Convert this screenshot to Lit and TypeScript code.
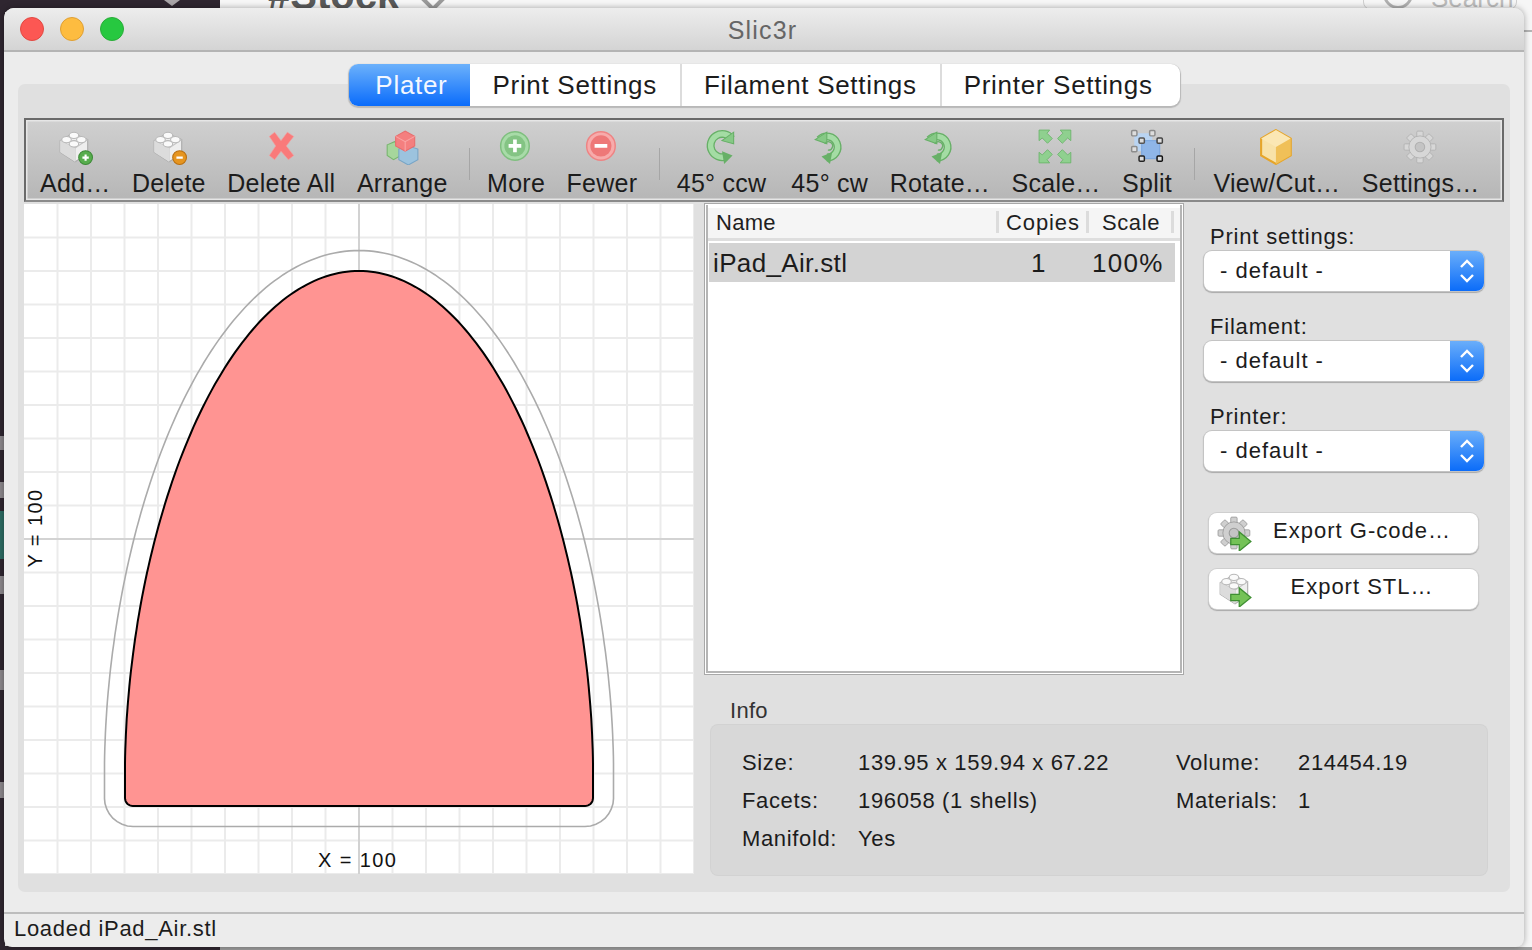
import { LitElement, html, css, svg } from "lit";
import { customElement } from "lit/decorators.js";

type Pt = [number, number];

// Object outline on the plater canvas: a super-ellipse dome over a straight base.
const CX = 335;
const TOP = 67;
const SHOULDER = 566;
const BOTTOM = 602;
const HALF = 234;
const CORNER = 8;

function dome(): Pt[] {
  const right: Pt[] = [];
  const n = 90;
  for (let i = 0; i <= n; i++) {
    const a = (i / n) * (Math.PI / 2);
    const t = Math.pow(Math.cos(a), 2 / 1.85);
    right.push([HALF * Math.sin(a), SHOULDER - t * (SHOULDER - TOP)]);
  }
  for (let y = SHOULDER + 6; y <= BOTTOM - CORNER; y += 6) right.push([HALF, y]);
  for (let i = 0; i <= 8; i++) {
    const a = (i / 8) * (Math.PI / 2);
    right.push([HALF - CORNER + CORNER * Math.cos(a), BOTTOM - CORNER + CORNER * Math.sin(a)]);
  }
  return right;
}

const RIGHT = dome();
const LOOP: Pt[] = [
  ...RIGHT.map(([h, y]) => [CX + h, y] as Pt),
  ...RIGHT.slice(1).reverse().map(([h, y]) => [CX - h, y] as Pt),
];

function toPath(pts: Pt[]): string {
  return "M" + pts.map(([x, y]) => `${x.toFixed(1)} ${y.toFixed(1)}`).join(" L") + " Z";
}

function offset(pts: Pt[], d: number): Pt[] {
  const n = pts.length;
  const out: Pt[] = [];
  for (let i = 0; i < n; i++) {
    const a = pts[(i - 1 + n) % n];
    const b = pts[(i + 1) % n];
    const dx = b[0] - a[0];
    const dy = b[1] - a[1];
    const len = Math.hypot(dx, dy) || 1;
    out.push([pts[i][0] + (dy / len) * d, pts[i][1] - (dx / len) * d]);
  }
  return out;
}

const INNER_PATH = toPath(LOOP);
const OUTER_PATH = toPath(offset(LOOP, 20.5));

const STEP = 33.5;
const lines: number[] = Array.from({ length: 20 }, (_, i) => (i + 1) * STEP);

const brick = svg`
  <path d="M3 11 L15 4 L29 10 L29 23 L17 31 L3 22 Z" fill="#eeeeee" stroke="#a9a9a9"/>
  <path d="M3 11 L17 18 L29 10 M17 18 V31" fill="none" stroke="#c4c4c4"/>
  <path d="M3 11 L17 18 V31 L3 22 Z" fill="#dcdcdc"/>
  <ellipse cx="9" cy="10" rx="4.5" ry="3" fill="#fafafa" stroke="#b8b8b8"/>
  <ellipse cx="16" cy="6" rx="4.5" ry="3" fill="#fafafa" stroke="#b8b8b8"/>
  <ellipse cx="16" cy="14" rx="4.5" ry="3" fill="#fafafa" stroke="#b8b8b8"/>
  <ellipse cx="23" cy="10" rx="4.5" ry="3" fill="#fafafa" stroke="#b8b8b8"/>`;

const arrowBadge = svg`<path d="M13 22 H21 V16 L32 25 L21 34 V28 H13 Z" fill="#74c257" stroke="#3f8f33" stroke-width="1.2"/>`;

const gear = (fill: string, stroke: string) => svg`
  <g transform="translate(16 17)">
    ${[0, 45, 90, 135, 180, 225, 270, 315].map(
      (a) => svg`<rect x="-3" y="-15" width="6" height="6" rx="1" fill="${fill}" stroke="${stroke}" stroke-width=".8" transform="rotate(${a})"/>`,
    )}
    <circle r="10.5" fill="${fill}" stroke="${stroke}" stroke-width=".8"/>
    <circle r="4.5" fill="#c4c4c4" stroke="${stroke}"/>
  </g>`;

const ring = (d: string) => svg`
  <path d="${d}" fill="none" stroke="#67b067" stroke-width="7.5"/>
  <path d="${d}" fill="none" stroke="#a4dca4" stroke-width="5"/>`;

const rotateCcw = svg`
  ${ring("M26 9 A11 11 0 1 0 21 26")}
  <path d="M28 3 V14 L17 11 Z" fill="#86c986" stroke="#67b067"/>
  <path d="M17 21 L27 25 L19 33 Z" fill="#67b067"/>`;

const rotateCw = svg`
  ${ring("M7 10 A10 10 0 1 1 14 27")}
  <path d="M3 10 L14 3 L14 14 Z" fill="#86c986" stroke="#67b067"/>
  <path d="M19 22 L9 26 L17 33 Z" fill="#67b067"/>
  <path d="M12 14 A4 4 0 1 1 15 20" fill="none" stroke="#67b067" stroke-width="1.2"/>`;

const scaleArrow = (x: number, y: number, rot: number) => svg`
  <g transform="translate(${x} ${y}) rotate(${rot})">
    <path d="M-6 -6 H4 L1.5 -3 L6.5 2 L2 6.5 L-3 1.5 L-6 4 Z" fill="#8fd08f" stroke="#6ab36a" stroke-width=".8"/>
  </g>`;

const handle = (x: number, y: number, c: string) => svg`<rect x="${x - 2.5}" y="${y - 2.5}" width="5" height="5" rx="1" fill="#ddd" stroke="${c}" stroke-width="1.4"/>`;

const ICONS: Record<string, unknown> = {
  add: svg`${brick}<circle cx="27" cy="27" r="6.5" fill="#57ad4d" stroke="#3d8a37"/><path d="M24 27 H30 M27 24 V30" stroke="#fff" stroke-width="2"/>`,
  del: svg`${brick}<circle cx="27" cy="27" r="6.5" fill="#e69520" stroke="#b96f10"/><path d="M24 27 H30" stroke="#fff" stroke-width="2"/>`,
  delall: svg`<path d="M6 7 L11 3 L17 11 L23 3 L29 7 L22 16 L29 25 L24 29 L17 21 L11 29 L6 25 L12 16 Z" fill="#f97a7a" stroke="#f0a0a0" stroke-width=".6"/>`,
  arrange: svg`
    <path d="M3 15 L10 12 L16 15 V25 L9 29 L3 25 Z" fill="#a6d69c" stroke="#76b56c"/>
    <path d="M14 19 L23 16 L32 19 V29 L23 34 L14 29 Z" fill="#9cc3de" stroke="#78a5c6"/>
    <path d="M11 7 L20 2 L29 7 V16 L20 21 L11 16 Z" fill="#f47f7f" stroke="#e86c6c"/>
    <path d="M11 7 L20 12 L29 7 M20 12 V21" fill="none" stroke="#f9a5a5"/>`,
  more: svg`<circle cx="16" cy="16" r="13.5" fill="#a8dba8" stroke="#7fbf7f" stroke-width="1.4"/><circle cx="16" cy="16" r="10" fill="#84c484"/><path d="M10 16 H22 M16 10 V22" stroke="#fff" stroke-width="3.5"/>`,
  fewer: svg`<circle cx="16" cy="16" r="13.5" fill="#f7abab" stroke="#ee8484" stroke-width="1.4"/><circle cx="16" cy="16" r="10" fill="#ee7878"/><path d="M10 16 H22" stroke="#fff" stroke-width="3.5"/>`,
  ccw: rotateCcw,
  cw: rotateCw,
  rotate: rotateCw,
  scale: svg`${scaleArrow(7, 7, 0)}${scaleArrow(25, 7, 90)}${scaleArrow(25, 26, 180)}${scaleArrow(7, 26, 270)}`,
  split: svg`
    <rect x="5" y="4" width="17" height="17" fill="#b9d4f2"/>
    <rect x="12" y="11" width="17" height="17" fill="#8fb6e8" stroke="#7aa6df"/>
    ${handle(5, 4, "#8c8c8c")}${handle(22, 4, "#8c8c8c")}${handle(5, 19, "#8c8c8c")}
    ${handle(12, 11, "#555")}${handle(29, 11, "#444")}${handle(12, 28, "#222")}${handle(29, 28, "#111")}`,
  view: svg`
    <path d="M16 1 L30 9 V25 L16 33 L2 25 V9 Z" fill="#f8e2a8" stroke="#e6a52a" stroke-width="2"/>
    <path d="M16 1 L30 9 L16 17 L2 9 Z" fill="#fbe7b4"/>
    <path d="M16 17 L30 9 V25 L16 33 Z" fill="#f0c058"/>`,
  settings: gear("#d7d7d7", "#b0b0b0"),
};

interface Tool {
  label?: string;
  icon?: string;
}

const TOOLS: Tool[] = [
  { label: "Add…", icon: "add" },
  { label: "Delete", icon: "del" },
  { label: "Delete All", icon: "delall" },
  { label: "Arrange", icon: "arrange" },
  {},
  { label: "More", icon: "more" },
  { label: "Fewer", icon: "fewer" },
  {},
  { label: "45° ccw", icon: "ccw" },
  { label: "45° cw", icon: "cw" },
  { label: "Rotate…", icon: "rotate" },
  { label: "Scale…", icon: "scale" },
  { label: "Split", icon: "split" },
  {},
  { label: "View/Cut…", icon: "view" },
  { label: "Settings…", icon: "settings" },
];

const SELECTS = ["Print settings:", "Filament:", "Printer:"];

@customElement("app-root")
export class AppRoot extends LitElement {
  static styles = css`
    :host {
      display: block;
      position: relative;
      width: 1532px;
      height: 950px;
      overflow: hidden;
      background: #f6f6f6;
      font-family: "Liberation Sans", Arial, sans-serif;
      color: #1c1c1c;
    }
    .dark-top, .dark-left, .dark-bottom, .gray-bottom, .teal, .stock, .chev, .tri, .search, .search-ring, .search-box, .mark, .edge {
      position: absolute;
    }
    .dark-top { left: 0; top: 0; width: 220px; height: 12px; background: #2f2630; }
    .dark-left { left: 0; top: 0; width: 5px; height: 950px; background: #2f2630; }
    .dark-bottom { left: 0; top: 946px; width: 220px; height: 4px; background: #2f2630; }
    .gray-bottom { left: 220px; top: 947px; width: 1312px; height: 3px; background: #9c9c9c; }
    .teal { left: 0; top: 511px; width: 4px; height: 48px; background: #2d6b62; }
    .mark { left: 0; width: 4px; background: #8b878b; }
    .m1 { top: 436px; height: 14px; }
    .m2 { top: 482px; height: 16px; }
    .m3 { top: 576px; height: 18px; }
    .m4 { top: 670px; height: 20px; }
    .m5 { top: 782px; height: 16px; }
    .edge { left: 1524px; top: 30px; width: 8px; height: 2px; background: #b4b4b4; }
    .stock { left: 268px; top: -25px; font-size: 40px; font-weight: 700; color: #5a5a5a; line-height: 40px; }
    .chev { left: 424px; top: -10px; width: 18px; height: 18px; box-sizing: border-box; border-right: 4px solid #9a9a9a; border-bottom: 4px solid #9a9a9a; transform: rotate(45deg); }
    .tri { left: 164px; top: 0; width: 0; height: 0; border-left: 8px solid transparent; border-right: 8px solid transparent; border-top: 6px solid #a9a5a8; }
    .search-box { left: 1363px; top: -30px; width: 152px; height: 38px; border: 1px solid #cfcfcf; border-radius: 8px; }
    .search { left: 1431px; top: -15px; font-size: 26px; line-height: 26px; color: #bcbcbc; }
    .search-ring { left: 1383px; top: -21px; width: 24px; height: 24px; border: 3px solid #b0b0b0; border-radius: 50%; }

    .window {
      position: absolute;
      left: 4px;
      top: 8px;
      width: 1520px;
      height: 939px;
      display: flex;
      flex-direction: column;
      background: #ececec;
      border-radius: 10px 10px 8px 8px;
      box-shadow: 0 0 6px rgba(0, 0, 0, 0.35);
      overflow: hidden;
    }
    .title {
      height: 42px;
      flex: none;
      display: flex;
      align-items: center;
      position: relative;
      padding-left: 16px;
      gap: 16px;
      background: linear-gradient(#ededed, #d4d4d4);
      border-bottom: 2px solid #b4b4b4;
    }
    .light { width: 24px; height: 24px; border-radius: 50%; box-sizing: border-box; }
    .r { background: #fc5753; border: 1px solid #e14942; }
    .y { background: #fdbc40; border: 1px solid #de9f34; }
    .g { background: #27c840; border: 1px solid #2aac39; }
    .title-text {
      position: absolute;
      left: 0;
      right: 3px;
      top: 8px;
      text-align: center;
      font-size: 25px;
      letter-spacing: 1.2px;
      color: #666;
    }
    .content {
      flex: 1;
      display: flex;
      flex-direction: column;
      padding: 12px 14px 20px;
      min-height: 0;
    }
    .tabs {
      align-self: center;
      margin-left: 1px;
      flex: none;
      display: flex;
      height: 42px;
      box-sizing: border-box;
      background: #fff;
      border-radius: 9px;
      box-shadow: 0 1px 1px 1px #b8b8b8;
      margin-bottom: -22px;
      position: relative;
      z-index: 1;
      font-size: 26px;
      letter-spacing: 0.7px;
    }
    .tab {
      padding: 0 23px 0 22px;
      display: flex;
      align-items: center;
      border-left: 2px solid #dcdcdc;
    }
    .tab:last-child { padding-right: 27px; }
    .tab.active {
      padding: 0 23px 0 26px;
      background: linear-gradient(#6cb1fb, #0a6cfb);
      color: #f4f8ff;
      border: none;
      border-radius: 9px 0 0 9px;
    }
    .tab.active + .tab { border-left: none; }
    .pane {
      flex: 1;
      background: #e0e0e0;
      border-radius: 7px;
      padding: 34px 6px 17px;
      display: flex;
      flex-direction: column;
      min-height: 0;
    }
    .toolbar {
      flex: none;
      height: 84px;
      box-sizing: border-box;
      border: 2px solid #6a6a6a;
      border-bottom-color: #8a8a8a;
      box-shadow: inset 0 0 0 1.5px #e6e6e6;
      background: linear-gradient(#d0d0d0, #b6b6b6);
      display: flex;
      gap: 21.5px;
      padding-left: 14px;
      font-size: 25px;
    }
    .tool {
      display: flex;
      flex-direction: column;
      align-items: center;
      justify-content: space-between;
      padding: 9px 0 2px;
      line-height: 30px;
      white-space: nowrap;
      letter-spacing: 0.25px;
    }
    .tool:nth-child(10) { margin-left: 3.5px; }
    .tool svg { width: 36px; height: 36px; display: block; }
    .sep { width: 1px; height: 32px; margin-top: 28px; background: #a6a6a6; margin-right: -4.5px; }
    .sep:nth-child(14) { margin-right: -2.5px; }
    .body { flex: 1; display: flex; min-height: 0; padding-top: 2px; }
    .canvas { width: 670px; height: 670px; flex: none; background: #fff; position: relative; }
    .canvas svg { display: block; }
    .axis-x, .axis-y {
      position: absolute;
      font-size: 20px;
      letter-spacing: 1.4px;
      line-height: 22px;
      white-space: nowrap;
      color: #111;
    }
    .axis-x { left: 294px; top: 645px; }
    .axis-y { left: -28px; top: 313px; transform: rotate(-90deg); }
    .side { flex: 1; display: flex; flex-direction: column; padding-left: 10px; min-width: 0; }
    .top-side { display: flex; flex: none; height: 472px; margin-top: -1px; }
    .list {
      width: 480px;
      height: 472px;
      box-sizing: border-box;
      flex: none;
      background: #fff;
      border: 1px solid #a8a8a8;
      padding: 1px;
      display: flex;
      flex-direction: column;
      box-shadow: inset 0 0 0 1px #fff;
    }
    .list-inner { flex: 1; border: 2px solid #b5b5b5; border-top: none; display: flex; flex-direction: column; }
    .head {
      height: 30px;
      margin-top: 3px;
      flex: none;
      display: flex;
      align-items: stretch;
      background: #f5f5f5;
      font-size: 22px;
      border-bottom: 3px solid #dedede;
      color: #1f1f1f;
    }
    .head span { height: 22px; line-height: 24px; margin-top: 3px; }
    .h1 { width: 288px; padding-left: 8px; box-sizing: border-box; letter-spacing: 0.3px; }
    .h2 { width: 90px; border-left: 3px solid #dcdcdc; padding-left: 7px; box-sizing: border-box; letter-spacing: 0.9px; }
    .h3 { width: 88px; border-left: 3px solid #dcdcdc; padding-left: 13px; box-sizing: border-box; border-right: 3px solid #dcdcdc; letter-spacing: 0.6px; }
    .row {
      margin: 2px 0 0 1px;
      width: 466px;
      height: 39px;
      background: #d3d3d3;
      display: flex;
      align-items: center;
      font-size: 26px;
      letter-spacing: 0.35px;
    }
    .row span { padding-top: 2px; }
    .c1 { width: 322px; padding-left: 4px; box-sizing: border-box; flex: none; }
    .c2 { width: 61px; flex: none; }
    .c3 { letter-spacing: 1.3px; }
    .controls { flex: 1; padding: 20px 0 0 20px; display: flex; flex-direction: column; font-size: 22px; min-width: 0; }
    .field { height: 90px; flex: none; }
    .field label { display: block; padding-left: 6px; line-height: 28px; letter-spacing: 0.8px; height: 28px; white-space: nowrap; }
    .select {
      width: 280px;
      height: 40px;
      box-sizing: border-box;
      background: #fff;
      border-radius: 8px;
      box-shadow: 0 0 0 1px #c4c4c4, 0 1px 1px 1px #a9a9a9;
      display: flex;
      align-items: center;
      justify-content: space-between;
      padding-left: 16px;
      overflow: hidden;
      letter-spacing: 1px;
    }
    .stepper {
      width: 34px;
      height: 40px;
      background: linear-gradient(#6aaefa, #0b6cf9);
      display: flex;
      align-items: center;
      justify-content: center;
    }
    .btns { display: flex; flex-direction: column; gap: 16px; margin-top: 20px; padding-left: 5px; }
    .btn {
      width: 269px;
      height: 40px;
      box-sizing: border-box;
      background: #fff;
      border-radius: 8px;
      box-shadow: 0 0 0 1px #cfcfcf, 0 1px 1px 1px #a9a9a9;
      display: flex;
      align-items: center;
      padding-left: 8px;
      letter-spacing: 1px;
      white-space: nowrap;
    }
    .btn svg { width: 36px; height: 36px; flex: none; }
    .btn .t { flex: 1; text-align: center; padding: 0 7px 5px 0; }
    .info-title { margin: 22px 0 0 26px; font-size: 22px; height: 28px; line-height: 28px; color: #333; letter-spacing: 0.3px; }
    .info {
      width: 776px;
      height: 154px;
      box-sizing: border-box;
      background: #d8d8d8;
      border-radius: 7px;
      box-shadow: 0 0 0 1px #d2d2d2;
      margin-left: 7px;
      padding: 19px 0 0 31px;
      display: grid;
      grid-template-columns: 116px 318px 122px 1fr;
      grid-auto-rows: 38px;
      align-items: center;
      font-size: 22px;
      letter-spacing: 0.65px;
    }
    .status {
      flex: none;
      height: 35px;
      box-sizing: border-box;
      border-top: 2px solid #bdbdbd;
      padding: 0 0 4px 10px;
      display: flex;
      align-items: center;
      font-size: 22px;
      letter-spacing: 0.7px;
    }
  `;

  private renderStepper() {
    return html`<span class="stepper">
      <svg width="18" height="28" viewBox="0 0 18 28" fill="none" stroke="#fff" stroke-width="2.4">
        <path d="M3 10 L9 4 L15 10" />
        <path d="M3 18 L9 24 L15 18" />
      </svg>
    </span>`;
  }

  render() {
    return html`
      <div class="dark-top"></div>
      <div class="dark-left"></div>
      <div class="teal"></div>
      <div class="mark m1"></div>
      <div class="mark m2"></div>
      <div class="mark m3"></div>
      <div class="mark m4"></div>
      <div class="mark m5"></div>
      <div class="edge"></div>
      <div class="dark-bottom"></div>
      <div class="gray-bottom"></div>
      <div class="tri"></div>
      <div class="stock">#Stock</div>
      <div class="chev"></div>
      <div class="search-box"></div>
      <div class="search-ring"></div>
      <div class="search">Search</div>

      <div class="window">
        <div class="title">
          <span class="light r"></span><span class="light y"></span><span class="light g"></span>
          <span class="title-text">Slic3r</span>
        </div>
        <div class="content">
          <div class="tabs">
            <div class="tab active">Plater</div>
            <div class="tab">Print Settings</div>
            <div class="tab">Filament Settings</div>
            <div class="tab">Printer Settings</div>
          </div>
          <div class="pane">
            <div class="toolbar">
              ${TOOLS.map((t) =>
                t.label
                  ? html`<div class="tool">
                      <svg viewBox="0 0 34 34">${ICONS[t.icon as string]}</svg>
                      <span>${t.label}</span>
                    </div>`
                  : html`<div class="sep"></div>`,
              )}
            </div>
            <div class="body">
              <div class="canvas">
                <svg width="670" height="670" viewBox="0 0 670 670">
                  ${lines.map(
                    (v) => svg`
                      <path d="M${v} 0 V670" stroke="#ebebeb" stroke-width="2" />
                      <path d="M0 ${v} H670" stroke="#ebebeb" stroke-width="2" />`,
                  )}
                  <path d="M335 0 V670 M0 335 H670" stroke="#cccccc" stroke-width="1.6" />
                  <path d="${OUTER_PATH}" fill="none" stroke="#ababab" stroke-width="1.6" />
                  <path d="${INNER_PATH}" fill="#ff9492" stroke="#000" stroke-width="2" />
                </svg>
                <div class="axis-x">X = 100</div>
                <div class="axis-y">Y = 100</div>
              </div>
              <div class="side">
                <div class="top-side">
                  <div class="list">
                    <div class="list-inner">
                      <div class="head">
                        <span class="h1">Name</span><span class="h2">Copies</span><span class="h3">Scale</span>
                      </div>
                      <div class="row">
                        <span class="c1">iPad_Air.stl</span><span class="c2">1</span><span class="c3">100%</span>
                      </div>
                    </div>
                  </div>
                  <div class="controls">
                    ${SELECTS.map(
                      (s) => html`<div class="field">
                        <label>${s}</label>
                        <div class="select"><span>- default -</span>${this.renderStepper()}</div>
                      </div>`,
                    )}
                    <div class="btns">
                      <div class="btn">
                        <svg viewBox="0 0 34 34">${gear("#cfcfcf", "#9a9a9a")}${arrowBadge}</svg>
                        <span class="t">Export G-code…</span>
                      </div>
                      <div class="btn">
                        <svg viewBox="0 0 34 34">${brick}${arrowBadge}</svg>
                        <span class="t">Export STL…</span>
                      </div>
                    </div>
                  </div>
                </div>
                <div class="info-title">Info</div>
                <div class="info">
                  <span>Size:</span><span>139.95 x 159.94 x 67.22</span><span>Volume:</span><span>214454.19</span>
                  <span>Facets:</span><span>196058 (1 shells)</span><span>Materials:</span><span>1</span>
                  <span>Manifold:</span><span>Yes</span>
                </div>
              </div>
            </div>
          </div>
        </div>
        <div class="status">Loaded iPad_Air.stl</div>
      </div>
    `;
  }
}
